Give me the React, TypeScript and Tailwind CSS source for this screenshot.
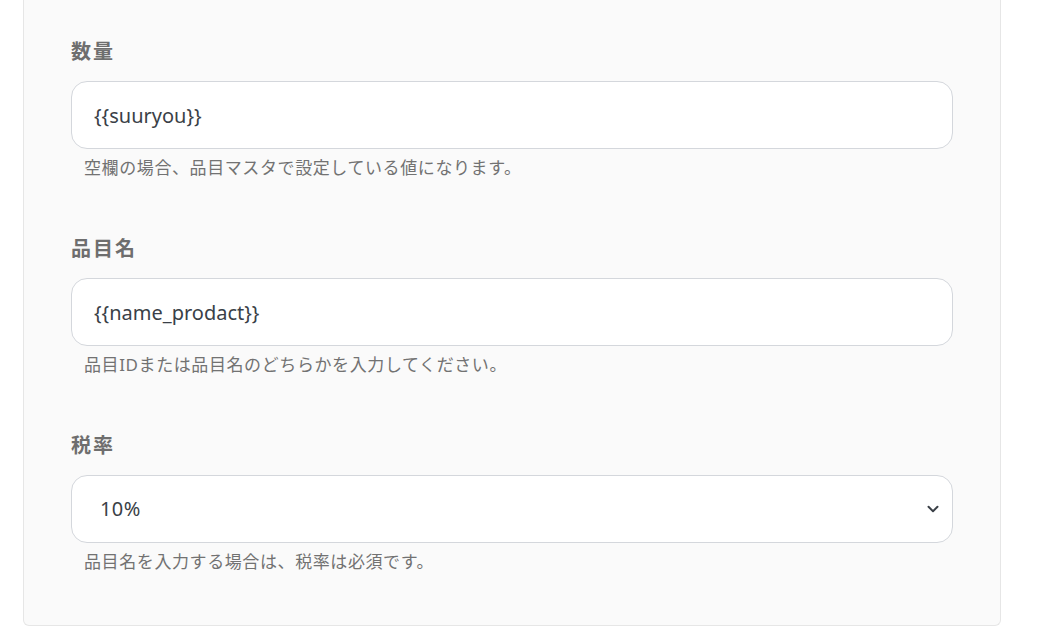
import { ChevronDown } from "lucide-react";

const font = "font-['Noto_Sans','Noto_Sans_CJK_JP',sans-serif]";

function Field({
  label,
  value,
  help,
  select,
}: {
  label: string;
  value: string;
  help: string;
  select?: boolean;
}) {
  return (
    <div className="mb-[54px]">
      <label className="block text-[20px] leading-[30px] font-bold tracking-[0.1em] text-[#6e6e6e] mb-[14px]">
        {label}
      </label>
      {select ? (
        <div className="relative">
          <select
            defaultValue={value}
            className={`${font} appearance-none w-full h-[68px] rounded-2xl border border-[#d4d7dc] bg-white pl-[28px] pr-10 text-[20px] tracking-[0.02em] text-[#3a3f47] outline-none`}
          >
            <option>{value}</option>
            <option>8%</option>
          </select>
          <ChevronDown
            size={18}
            strokeWidth={2.6}
            className="absolute right-[11px] top-[25px] text-[#3a3f47] pointer-events-none"
          />
        </div>
      ) : (
        <input
          defaultValue={value}
          className={`${font} block w-full h-[68px] rounded-2xl border border-[#d4d7dc] bg-white px-[22px] text-[20px] text-[#3a3f47] outline-none`}
        />
      )}
      <p className="mt-[7px] pl-[13px] text-[17px] leading-[24px] tracking-[0.035em] text-[#727272]">
        {help}
      </p>
    </div>
  );
}

export default function App() {
  return (
    <div className={`${font} min-h-[626px] bg-white`}>
      <div className="ml-[23px] w-[978px] h-[626px] border-x border-b border-[#e6e6e6] rounded-b-md bg-[#fafafa] px-[47px] pt-[37px]">
        <Field
          label="数量"
          value="{{suuryou}}"
          help="空欄の場合、品目マスタで設定している値になります。"
        />
        <Field
          label="品目名"
          value="{{name_prodact}}"
          help="品目IDまたは品目名のどちらかを入力してください。"
        />
        <Field
          label="税率"
          value="10%"
          help="品目名を入力する場合は、税率は必須です。"
          select
        />
      </div>
    </div>
  );
}
